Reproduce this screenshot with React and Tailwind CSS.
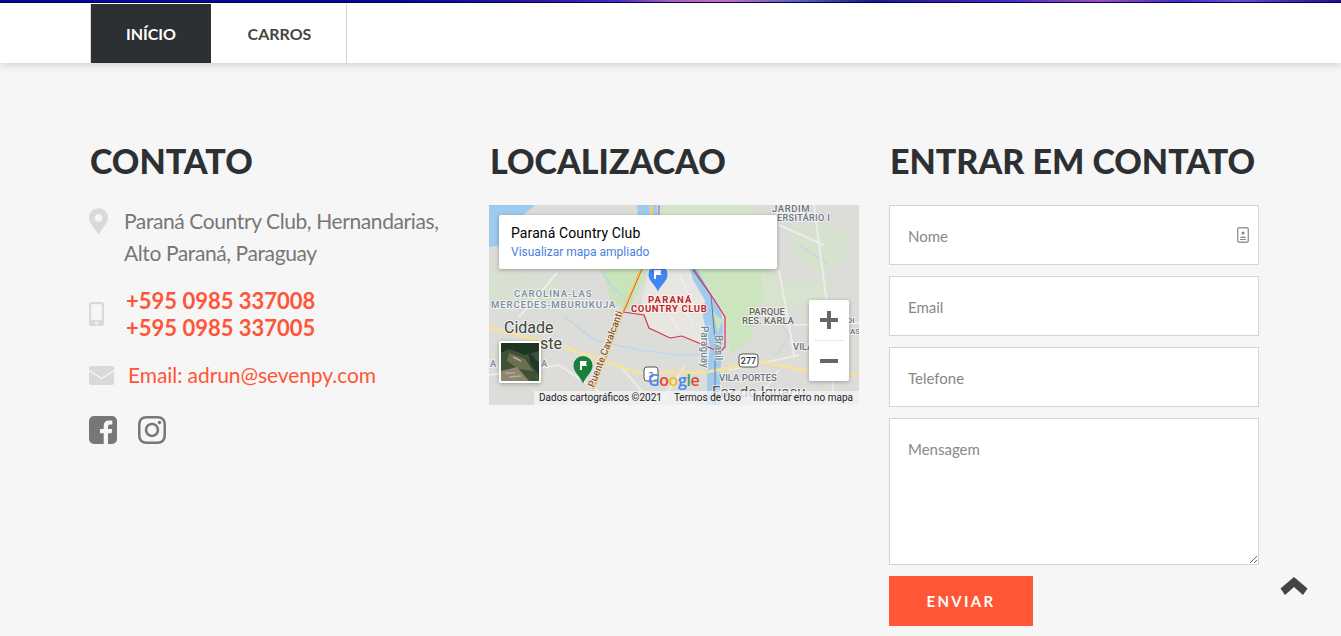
import React from "react";
import { FaMapMarkerAlt, FaMobileAlt, FaInstagram } from "react-icons/fa";

function MapArt() {
  const L = ({ x, y, s = 9.5, c = "#6b7280", w = 500, t, ls = 0, r }) => (
    <text x={x} y={y} fontSize={s} fill={c} fontWeight={w} letterSpacing={ls} transform={r ? `rotate(${r} ${x} ${y})` : undefined} stroke="#ffffff" strokeWidth="2" paintOrder="stroke" strokeOpacity="0.6">{t}</text>
  );
  return (
    <svg width="370" height="200" viewBox="0 0 370 200" className="block" fontFamily="Roboto, sans-serif">
      <rect width="370" height="200" fill="#dcdcd9" />
      {/* Green areas */}
      <path d="M112 64 L160 64 L140 104 L122 96 L118 80 Z" fill="#c9e3bb" />
      <path d="M208 64 L282 64 L286 88 L270 100 L262 135 L242 150 L236 110 L224 88 Z" fill="#cde5bf" />
      <path d="M175 0 L258 0 L280 20 L280 64 L200 64 L172 30 Z" fill="#d4e5c9" />
      <path d="M300 25 L335 18 L360 30 L355 55 L330 70 L310 55 Z" fill="#d6e2cd" />
      <path d="M272 68 L305 78 L340 74 L340 98 L300 106 L276 98 Z" fill="#d8e3cf" />
      <path d="M0 62 L60 72 L95 102 L40 102 L0 92 Z" fill="#d6e2cc" opacity="0.6" />
      <path d="M150 107 L160 64 L203 64 L216 95 L218 140 L193 131 L181 133 L160 123 L155 110 Z" fill="#e8e6e0" />
      {/* Water */}
      <path d="M0 0 L46 0 L18 24 L12 40 L0 42 Z" fill="#9fcbee" />
      <path d="M148 0 L168 0 L170 22 L150 22 Z" fill="#9fcbee" />
      <path d="M201 64 L208 64 L223 90 L231 102 L234 122 L233 145 L231 168 L231 200 L218 200 L218 168 L221 142 L214 112 L216 95 L204 75 Z" fill="#9fcbee" />
      <path d="M224 107 L233 115 L229 128 Z" fill="#cde5bf" />
      <path d="M112 66 L122 80 L135 92 L138 104 M76 112 L105 135 L150 145 L190 150 L215 150" fill="none" stroke="#b4d6f0" strokeWidth="1.200" />
      <path d="M285 110 L300 130 L288 150 M310 40 L340 60" fill="none" stroke="#b4d6f0" strokeWidth="1" />
      {/* Minor roads */}
      <path d="M68 68 L45 95 L30 112 M0 170 L70 160 L130 200 M130 160 L165 200 M195 162 L170 200 M325 0 L338 100 L345 200 M290 20 L335 40 M305 120 L370 118 M240 165 L310 150 M265 200 L290 165 M290 65 L300 120 L305 150" fill="none" stroke="#ececea" strokeWidth="2" />
      <path d="M168 90 L190 125 M180 88 L205 118 M190 70 L210 110" fill="none" stroke="#f5f5f2" strokeWidth="1" />
      {/* Highways */}
      <path d="M0 123 L75 142 L150 168 L218 167 L272 157 L325 167 L370 170" fill="none" stroke="#f6e2a0" strokeWidth="3" />
      <path d="M134 107 L104 184" fill="none" stroke="#e8b56a" strokeWidth="3" />
      <path d="M162 0 L164 20 L152 64 L134 107" fill="none" stroke="#f2cf6c" strokeWidth="3" />
      <path d="M153 64 L135 106" fill="none" stroke="#d9603a" strokeWidth="1" />
      {/* Rail */}
      <path d="M170 0 L170 60 M205 64 L222 90 L226 135 L226 200" fill="none" stroke="#747c85" strokeWidth="1" />
      {/* Boundary */}
      <path d="M134 107 L155 110 L160 123 L181 133 L193 131 L231 147 L236 142 L236 112 L224 93 L204 65" fill="none" stroke="#d8344f" strokeWidth="1.200" />
      {/* Labels */}
      <L x={283} y={7} t="JARDIM" ls={0.6} />
      <L x={288} y={16} t="ERSITÁRIO I" s={9} ls={0.4} />
      <L x={25} y={92} t="CAROLINA-LAS" ls={1} c="#7b8ca3" />
      <L x={2} y={103} t="MERCEDES-MBURUKUJA" ls={0.95} c="#7b8ca3" />
      <L x={15} y={128} t="Cidade" s={16} c="#444" w={400} />
      <L x={51} y={144} t="ste" s={16} c="#444" w={400} />
      <L x={1} y={162} t="A" c="#7b8ca3" />
      <L x={52} y={162} t="A" c="#7b8ca3" />
      <L x={159} y={98} t="PARANÁ" s={9.5} c="#c5221f" w={700} ls={1.2} />
      <L x={142} y={107} t="COUNTRY CLUB" s={9.5} c="#c5221f" w={700} ls={0.6} />
      <L x={105} y={183} t="Puente Cavalcanti" s={10} c="#8a5a2a" r={-69} />
      <L x={212} y={121} t="Paraguay" s={10} c="#7a8694" r={90} />
      <L x={226} y={130} t="Brasil" s={10} c="#7a8694" r={90} />
      <L x={260} y={110} t="PARQUE" c="#666" />
      <L x={253} y={119} t="RES. KARLA" c="#666" />
      <L x={353} y={118} t="RDI" s={8} />
      <L x={361} y={129} t="AS" s={8} />
      <L x={304} y={145} t="VILA" />
      <L x={230} y={176} t="VILA PORTES" />
      <L x={223} y={192} t="Foz do Iguaçu" s={15} c="#555" w={400} />
      {/* Shields */}
      <rect x="250" y="149" width="19" height="13" rx="3" fill="#fff" stroke="#555" />
      <text x="259.500" y="159" fontSize="9" fill="#333" textAnchor="middle" fontWeight="500">277</text>
      <rect x="155" y="162" width="14" height="14" rx="3" fill="#fff" stroke="#555" />
      <text x="162" y="172" fontSize="8" fill="#333" textAnchor="middle">2</text>
      {/* Markers */}
      <path d="M169 60 a9.500 9.500 0 0 1 9.500 9.500 c0 7 -7 10 -9.500 17 c-2.500 -7 -9.500 -10 -9.500 -17 a9.500 9.500 0 0 1 9.500 -9.500Z" fill="#4285f4" />
      <path d="M165 65 h7.500 l-1 2.500 l1 2.500 h-5.500 v4 h-2Z" fill="#fff" />
      <path d="M94 151 a9.500 9.500 0 0 1 9.500 9.500 c0 7 -7 11 -9.500 18 c-2.500 -7 -9.500 -11 -9.500 -18 a9.500 9.500 0 0 1 9.500 -9.500Z" fill="#188038" />
      <path d="M91 156 h7 l-1 2.500 l1 2.500 h-5 v4 h-2Z" fill="#fff" />
    </svg>
  );
}

function Satellite() {
  return (
    <svg width="38" height="38" viewBox="0 0 38 38" className="block">
      <rect width="38" height="38" fill="#3f5236" />
      <path d="M0 0 H38 V8 L24 12 L8 6 L0 10Z" fill="#1f3323" />
      <path d="M8 10 L24 16 L32 28 L18 26 L6 18Z" fill="#6e6e55" />
      <path d="M0 28 L16 24 L28 38 H0Z" fill="#8c8670" />
      <path d="M26 6 L38 20 V32 L30 22Z" fill="#22382a" />
      <path d="M4 30 L14 30 M8 34 L20 33 M12 14 L20 18" stroke="#b5ad96" strokeWidth="1.500" />
    </svg>
  );
}

export default function App() {
  return (
    <div className="relative h-[636px] overflow-hidden bg-[#f6f6f6] font-['Lato',sans-serif]">
      <div className="h-[3px] border-b border-[#020250] bg-[linear-gradient(90deg,#0808a0_0%,#0a0a9a_30%,#2a18a8_40%,#4a2ac8_46%,#b060c0_50%,#d070c0_54%,#5060c0_60%,#1a1a90_65%,#4a2ac8_75%,#a050c0_82%,#4a2ac8_88%,#6a50e0_92%,#201090_100%)]" />
      <header className="relative z-10 h-[60px] bg-white pt-px pl-[90px] shadow-[0_2px_8px_rgba(0,0,0,0.15)]">
        <nav className="flex h-full">
          <a className="flex w-[121px] items-center justify-center border-l border-[#ddd] bg-[#2d3033] text-[16px] font-bold text-white">INÍCIO</a>
          <a className="flex w-[136px] items-center justify-center border-r border-[#d4d4d4] pl-[2px] text-[16px] font-bold text-[#444]">CARROS</a>
        </nav>
      </header>

      <main className="flex gap-[30px] pl-[89px] pt-[78px]">
        <section className="w-[370px]">
          <h2 className="h-[64px] pl-px text-[34px] leading-[40px] font-black text-[#2d3033]">CONTATO</h2>
          <div className="flex">
            <FaMapMarkerAlt className="mt-[2px] h-[28px] w-[19px] shrink-0 text-[#d9d9d9]" />
            <p className="ml-[16px] w-[335px] text-[21px] leading-[32px] tracking-[-0.4px] text-[#777]">Paraná Country Club, Hernandarias, Alto Paraná, Paraguay</p>
          </div>
          <div className="mt-[18px] flex items-center">
            <FaMobileAlt className="h-[24px] w-[15px] shrink-0 text-[#d9d9d9]" />
            <div className="ml-[22px] text-[22px] leading-[27px] font-bold text-[#ff5536]">
              <div>+595 0985 337008</div>
              <div>+595 0985 337005</div>
            </div>
          </div>
          <div className="mt-[18px] flex items-center">
            <svg width="25" height="19" viewBox="0 0 25 19" className="shrink-0">
              <rect width="25" height="19" rx="2" fill="#d9d9d9" />
              <path d="M0 4.500 L12.500 12.500 L25 4.500" fill="none" stroke="#f6f6f6" strokeWidth="1.300" />
            </svg>
            <span className="ml-[14px] text-[21px] leading-[32px] tracking-[-0.08px] text-[#ff5536]">Email: adrun@sevenpy.com</span>
          </div>
          <div className="mt-[23px] flex items-center gap-[21px]">
            <svg width="28" height="28" viewBox="0 0 28 28">
              <path fillRule="evenodd" d="M5 0h18a5 5 0 0 1 5 5v18a5 5 0 0 1-5 5h-4V17.200h3.600l.6-4.200H19v-2.600c0-1.200.4-2 2.100-2h2.200V4.600c-.4 0-1.700-.2-3.200-.2-3.200 0-5.400 2-5.400 5.500V13h-3.700v4.200h3.700V28H5a5 5 0 0 1-5-5V5a5 5 0 0 1 5-5z" fill="#777" />
            </svg>
            <FaInstagram className="h-[32px] w-[28px] text-[#777]" />
          </div>
        </section>

        <section className="w-[370px]">
          <h2 className="h-[64px] pl-px text-[34px] leading-[40px] font-black text-[#2d3033]">LOCALIZACAO</h2>
          <div className="relative h-[200px] w-[370px] overflow-hidden font-['Roboto',sans-serif]">
            <MapArt />
            <div className="absolute top-[10px] left-[10px] h-[54px] w-[278px] rounded-[2px] bg-white pt-[10px] pl-[12px] shadow-[0_1px_4px_rgba(0,0,0,0.3)]">
              <div className="text-[14px] leading-[17px] font-normal tracking-[0.1px] text-black">Paraná Country Club</div>
              <div className="mt-[3px] text-[12px] leading-[15px] text-[#4d7ee0]">Visualizar mapa ampliado</div>
            </div>
            <div className="absolute top-[95px] left-[320px] flex h-[81px] w-[40px] flex-col items-center rounded-[2px] bg-white shadow-[0_1px_4px_rgba(0,0,0,0.3)]">
              <svg width="18" height="18" viewBox="0 0 18 18" className="mt-[11px]"><path d="M7 0h4v7h7v4h-7v7H7v-7H0V7h7z" fill="#666" /></svg>
              <div className="mt-[11px] h-px w-[30px] bg-[#e6e6e6]" />
              <svg width="18" height="18" viewBox="0 0 18 18" className="mt-[11px]"><path d="M0 7h18v4H0z" fill="#666" /></svg>
            </div>
            <div className="absolute top-[136px] left-[10px] rounded-[2px] border-2 border-white shadow-[0_1px_4px_rgba(0,0,0,0.3)]">
              <Satellite />
            </div>
            <div className="absolute top-[165px] left-[159px] flex font-['Open_Sans',sans-serif] text-[16px] leading-[20px] font-semibold tracking-[-0.4px]">
              <span className="text-[#4285f4]">G</span><span className="text-[#ea4335]">o</span><span className="text-[#fbbc05]">o</span><span className="text-[#4285f4]">g</span><span className="text-[#34a853]">l</span><span className="text-[#ea4335]">e</span>
            </div>
            <div className="absolute top-[186px] right-0 flex h-[14px] w-[325px] items-center bg-[rgba(245,245,245,0.75)] pl-[5px] text-[10px] leading-[14px] text-[#222]">
              <span>Dados cartográficos ©2021</span>
              <span className="ml-[12px]">Termos de Uso</span>
              <span className="ml-[12px]">Informar erro no mapa</span>
            </div>
          </div>
        </section>

        <section className="w-[370px]">
          <h2 className="h-[64px] pl-px text-[34px] leading-[40px] font-black whitespace-nowrap text-[#2d3033]">ENTRAR EM CONTATO</h2>
          <form className="flex flex-col gap-[11px]">
            <div className="relative">
              <input placeholder="Nome" className="block h-[60px] w-full border border-[#d4d4d4] bg-white px-[18px] pt-px text-[15px] outline-none placeholder:text-[#888]" />
              <svg width="12" height="16" viewBox="0 0 12 16" className="absolute top-[22px] right-[10px]"><rect x="0.700" y="0.700" width="10.600" height="14.600" rx="1.500" fill="none" stroke="#999" strokeWidth="1.400" /><circle cx="6" cy="6" r="1.600" fill="#888" /><path d="M3 11c0-2 6-2 6 0zM3 12h6v1H3z" fill="#888" /></svg>
            </div>
            <input placeholder="Email" className="block h-[60px] w-full border border-[#d4d4d4] bg-white px-[18px] pt-px text-[15px] outline-none placeholder:text-[#888]" />
            <input placeholder="Telefone" className="block h-[60px] w-full border border-[#d4d4d4] bg-white px-[18px] pt-px text-[15px] outline-none placeholder:text-[#888]" />
            <textarea placeholder="Mensagem" className="block h-[147px] w-full border border-[#d4d4d4] bg-white px-[18px] py-[20px] text-[15px] leading-[20px] outline-none placeholder:text-[#888]" />
            <button type="button" className="h-[50px] w-[144px] bg-[#ff5636] text-[15px] font-bold tracking-[2.300px] text-white">ENVIAR</button>
          </form>
        </section>
      </main>

      <svg width="28" height="18" viewBox="0 0 27 18" className="absolute top-[577px] left-[1280px]">
        <path d="M13.500 0L27 11.500L22.500 18L13.500 10L4.500 18L0 11.500Z" fill="#444" />
      </svg>
    </div>
  );
}
